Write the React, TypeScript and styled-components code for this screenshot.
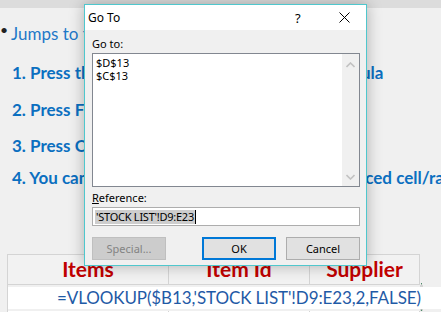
import React from "react";
import styled, {createGlobalStyle} from "styled-components";

const Global = createGlobalStyle`
    html, body {
        margin: 0;
        padding: 0;
        width: 441px;
        height: 312px;
        overflow: hidden;
        background: #f0f0f0;
    }
`

const Page = styled.div`
    position: relative;
    width: 441px;
    height: 312px;
    overflow: hidden;
    background: #f0f0f0;
    font-family: Lato, "Open Sans", sans-serif;
`

const TopStrip = styled.div`
    height: 8px;
    background: #dcdcdc;
`

const Notes = styled.div`
    display: flex;
    flex-direction: column;
`

const BulletLine = styled.div`
    display: flex;
    align-items: center;
    height: 20px;
    margin-top: 15px;
    white-space: nowrap;
`

const Bullet = styled.span`
    width: 11px;
    font-size: 14px;
    color: #222;
    line-height: 1;
    margin-top: -6px;
`

const Jumps = styled.span`
    font-size: 17px;
    color: #1f78c8;
`

const Step = styled.div<{ $top: number }>`
    margin-top: ${p => p.$top}px;
    padding-left: 12px;
    height: 20px;
    line-height: 20px;
    font-size: 17px;
    font-weight: 700;
    color: #0b6fc0;
    white-space: nowrap;
`

const Sheet = styled.div`
    margin: 66px 0 0 7px;
    display: grid;
    grid-template-columns: 161px 141px 110px;
    grid-template-rows: 30px 26px 10px;
    border-top: 1px solid #d4d4d4;
    border-left: 1px solid #d4d4d4;
    width: 412px;
`

const HeadCell = styled.div`
    display: flex;
    align-items: center;
    justify-content: center;
    border-right: 1px solid #d4d4d4;
    border-bottom: 1px solid #d4d4d4;
    background: #f2f2f2;
    font-size: 21px;
    font-weight: 700;
    color: #c00000;
    white-space: nowrap;
    padding-bottom: 2px;
`

const Cell = styled.div<{ $active?: boolean }>`
    grid-row: 2;
    background: #fff;
    border-right: 1px solid #d4d4d4;
    border-bottom: ${p => p.$active ? '2px solid #217346' : '1px solid #d4d4d4'};
    border-top: ${p => p.$active ? '2px solid #217346' : 'none'};
    margin-top: ${p => p.$active ? '-2px' : '0'};
`

const EmptyCell = styled.div`
    grid-row: 3;
    background: #fff;
    border-right: 1px solid #d4d4d4;
`

const Formula = styled.div`
    grid-row: 2;
    grid-column: 1 / -1;
    align-self: center;
    height: 22px;
    line-height: 22px;
    margin-top: -1px;
    padding-left: 49px;
    background: #fff;
    font-size: 17px;
    letter-spacing: -0.1px;
    color: #1f5aa6;
    white-space: nowrap;
    overflow: visible;
    width: 420px;
    z-index: 1;
`

/* dialog */

const Dialog = styled.div`
    position: absolute;
    left: 84px;
    top: 4px;
    width: 281px;
    height: 260px;
    border: 1px solid #4fc7cd;
    background: #f0f0f0;
    box-shadow: 0 0 14px rgba(0, 0, 0, 0.28);
    font-family: "Noto Sans", "Open Sans", sans-serif;
    font-size: 11px;
    color: #000;
    display: flex;
    flex-direction: column;
    z-index: 5;
`

const TitleBar = styled.div`
    height: 25px;
    background: #fff;
    display: flex;
    align-items: center;
    padding-left: 3px;
    font-size: 12px;
`

const TitleText = styled.span`
    flex: 1;
`

const Help = styled.span`
    font-size: 13px;
    width: 20px;
    margin-right: 24px;
`

const CloseIcon = () => (
    <svg width="11" height="11" viewBox="0 0 11 11" style={{marginRight: 16}}>
        <path d="M0.5 0.5 L10.5 10.5 M10.5 0.5 L0.5 10.5" stroke="#000" strokeWidth="1" fill="none"/>
    </svg>
)

const Body = styled.div`
    padding: 7px 6px 0 7px;
    display: flex;
    flex-direction: column;
`

const Label = styled.div`
    height: 14px;
    line-height: 14px;
    margin-bottom: 2px;
`

const Underline = styled.span`
    text-decoration: underline;
`

const ListBox = styled.div`
    height: 132px;
    border: 1px solid #828790;
    background: #fff;
    display: flex;
`

const ListItems = styled.div`
    flex: 1;
    padding: 2px 3px;
    line-height: 13px;
`

const ScrollBar = styled.div`
    width: 17px;
    background: #f0f0f0;
    display: flex;
    flex-direction: column;
    justify-content: space-between;
    align-items: center;
    padding: 8px 0 6px;
`

const Chevron = ({down}: { down?: boolean }) => (
    <svg width="9" height="6" viewBox="0 0 9 6">
        <path d={down ? "M0.5 1 L4.5 5 L8.5 1" : "M0.5 5 L4.5 1 L8.5 5"} stroke="#c2c2c2" strokeWidth="1.6"
              fill="none"/>
    </svg>
)

const RefLabel = styled(Label)`
    margin-top: 4px;
`

const RefInput = styled.div`
    height: 17px;
    border: 1px solid #adadad;
    background: #fff;
    display: flex;
    align-items: center;
    padding-left: 2px;
`

const Selected = styled.span`
    background: #cdcdcd;
    line-height: 14px;
    padding: 0 1px;
    letter-spacing: -0.25px;
    border-right: 1px solid #000;
`

const Buttons = styled.div`
    display: flex;
    gap: 10px;
    margin-top: 11px;
`

const Button = styled.div<{ $disabled?: boolean, $default?: boolean }>`
    width: 74px;
    height: 23px;
    box-sizing: border-box;
    display: flex;
    align-items: center;
    justify-content: center;
    background: ${p => p.$disabled ? '#cccccc' : '#e1e1e1'};
    border: ${p => p.$default ? '2px solid #0078d7' : '1px solid ' + (p.$disabled ? '#bfbfbf' : '#adadad')};
    color: ${p => p.$disabled ? '#838383' : '#000'};
    padding-bottom: 1px;
`

const Spacer = styled.div`
    flex: 1;
`

export default function App() {
    return (
        <Page>
            <Global/>
            <TopStrip/>
            <Notes>
                <BulletLine><Bullet>•</Bullet><Jumps>Jumps to the cells a formula refers to</Jumps></BulletLine>
                <Step $top={20}>1. Press the cell which contains your long formula</Step>
                <Step $top={17}>2. Press F5 key</Step>
                <Step $top={16}>3. Press Ctrl+[ key</Step>
                <Step $top={12}>4. You can now use Go To to jump to all referenced cell/range</Step>
            </Notes>
            <Sheet>
                <HeadCell>Items</HeadCell>
                <HeadCell>Item Id</HeadCell>
                <HeadCell>Supplier</HeadCell>
                <Cell/>
                <Cell $active/>
                <Cell/>
                <Formula>=VLOOKUP($B13,'STOCK LIST'!D9:E23,2,FALSE)</Formula>
                <EmptyCell/>
                <EmptyCell/>
                <EmptyCell/>
            </Sheet>

            <Dialog>
                <TitleBar>
                    <TitleText>Go To</TitleText>
                    <Help>?</Help>
                    <CloseIcon/>
                </TitleBar>
                <Body>
                    <Label>Go to:</Label>
                    <ListBox>
                        <ListItems>
                            <div>$D$13</div>
                            <div>$C$13</div>
                        </ListItems>
                        <ScrollBar>
                            <Chevron/>
                            <Chevron down/>
                        </ScrollBar>
                    </ListBox>
                    <RefLabel><Underline>R</Underline>eference:</RefLabel>
                    <RefInput><Selected>'STOCK LIST'!D9:E23</Selected></RefInput>
                    <Buttons>
                        <Button $disabled>Special...</Button>
                        <Spacer/>
                        <Button $default>OK</Button>
                        <Button>Cancel</Button>
                    </Buttons>
                </Body>
            </Dialog>
        </Page>
    )
}
